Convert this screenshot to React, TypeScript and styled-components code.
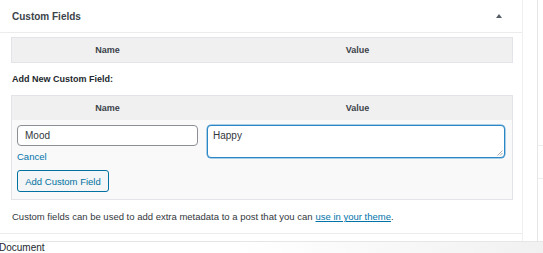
import styled, { createGlobalStyle } from "styled-components";

const GlobalStyle = createGlobalStyle`
  html, body {
    margin: 0;
    padding: 0;
    background: #fff;
    font-family: "Liberation Sans", Arial, sans-serif;
    color: #32373c;
  }
`;

const Page = styled.div`
  width: 543px;
  height: 253px;
  overflow: hidden;
  display: flex;
  flex-direction: column;
`;

const Top = styled.div`
  display: flex;
  height: 242px;
  border-bottom: 1px solid #e6e6e6;
  box-sizing: border-box;
`;

const Panel = styled.section`
  width: 523px;
  border-right: 1px solid #f0f0f0;
  box-sizing: border-box;
  display: flex;
  flex-direction: column;
`;

const PanelHeader = styled.div`
  height: 33px;
  display: flex;
  align-items: center;
  justify-content: space-between;
  padding: 0 20px 0 12px;
  border-bottom: 1px solid #ececec;
  box-sizing: border-box;
`;

const Title = styled.h2`
  margin: 0;
  font-size: 10px;
  font-weight: 700;
  color: #3c434a;
`;

const Caret = styled.span`
  width: 0;
  height: 0;
  border-left: 3px solid transparent;
  border-right: 3px solid transparent;
  border-bottom: 4px solid #555d66;
`;

const PanelBody = styled.div`
  padding: 4px 10px 0 11px;
  flex: 1;
  border-bottom: 1px solid #ececec;
  margin-bottom: 7px;
`;

const Table = styled.div`
  border: 1px solid #e2e4e7;
  box-sizing: border-box;
  width: 502px;
`;

const HeadRow = styled.div<{ $h: number }>`
  display: grid;
  grid-template-columns: 191px 1fr;
  height: ${(p) => p.$h}px;
  align-items: center;
  background: #f0f0f0;
  font-size: 9px;
  font-weight: 700;
  color: #3c434a;
  text-align: center;
`;

const AddLabel = styled.p`
  margin: 0;
  height: 32px;
  display: flex;
  align-items: center;
  font-size: 9px;
  font-weight: 700;
  color: #23282d;
  padding-left: 1px;
`;

const EditRow = styled.div`
  display: grid;
  grid-template-columns: 190px 1fr;
  background: #f9f9f9;
  padding: 5px 7px 7px 5px;
`;

const NameCell = styled.div`
  display: flex;
  flex-direction: column;
  align-items: flex-start;
`;

const TextInput = styled.div`
  width: 181px;
  height: 21px;
  box-sizing: border-box;
  border: 1px solid #8c8f94;
  border-radius: 4px;
  background: #fff;
  font-size: 10px;
  color: #32373c;
  padding: 0 7px;
  display: flex;
  align-items: center;
`;

const CancelLink = styled.a`
  margin-top: 5px;
  font-size: 9.5px;
  color: #0073aa;
  text-decoration: none;
`;

const Button = styled.button`
  margin-top: 8px;
  height: 22px;
  width: 92px;
  padding: 0;
  border: 1px solid #0071a1;
  border-radius: 3px;
  background: #f3f5f6;
  color: #0071a1;
  font-family: "Liberation Sans", Arial, sans-serif;
  font-size: 9.5px;
`;

const TextArea = styled.div`
  position: relative;
  height: 33px;
  box-sizing: border-box;
  border: 1.5px solid #2b86c4;
  border-radius: 4px;
  background: #fff;
  box-shadow: 0 0 0 0.5px #5ba4d6;
  font-size: 10px;
  color: #32373c;
  padding: 4px 5px;
`;

const Grip = styled.svg`
  position: absolute;
  right: 1px;
  bottom: 1px;
`;

const Hint = styled.p`
  margin: 0;
  height: 33px;
  display: flex;
  align-items: center;
  font-size: 9.5px;
  color: #32373c;
  padding-left: 1px;

  a {
    color: #0073aa;
    margin-left: 3px;
  }
`;

const Side = styled.aside`
  flex: 1;
  margin-left: 14px;
  border-left: 1px solid #e6e6e6;
  display: flex;
  flex-direction: column;
`;

const SideRow = styled.div<{ $h: number }>`
  height: ${(p) => p.$h}px;
  border-bottom: 1px solid #eeeeee;
`;

const Footer = styled.div`
  flex: 1;
  display: flex;
  align-items: center;
  margin-left: -1px;
  font-size: 10px;
  color: #23282d;
  background: linear-gradient(90deg, #ffffff 0%, #ffffff 45%, #f1f1f1 100%);
`;

export default function App() {
  return (
    <>
      <GlobalStyle />
      <Page>
        <Top>
          <Panel>
            <PanelHeader>
              <Title>Custom Fields</Title>
              <Caret />
            </PanelHeader>
            <PanelBody>
              <Table>
                <HeadRow $h={24}>
                  <span>Name</span>
                  <span>Value</span>
                </HeadRow>
              </Table>
              <AddLabel>Add New Custom Field:</AddLabel>
              <Table>
                <HeadRow $h={24}>
                  <span>Name</span>
                  <span>Value</span>
                </HeadRow>
                <EditRow>
                  <NameCell>
                    <TextInput>Mood</TextInput>
                    <CancelLink href="#">Cancel</CancelLink>
                    <Button>Add Custom Field</Button>
                  </NameCell>
                  <TextArea>
                    Happy
                    <Grip width="6" height="6" viewBox="0 0 6 6">
                      <path d="M5.5 0.5 L0.5 5.5 M5.5 3 L3 5.5" stroke="#999" strokeWidth="0.8" />
                    </Grip>
                  </TextArea>
                </EditRow>
              </Table>
              <Hint>
                Custom fields can be used to add extra metadata to a post that you can
                <a href="#">use in your theme</a>.
              </Hint>
            </PanelBody>
          </Panel>
          <Side>
            <SideRow $h={145} />
            <SideRow $h={32} />
          </Side>
        </Top>
        <Footer>Document</Footer>
      </Page>
    </>
  );
}
